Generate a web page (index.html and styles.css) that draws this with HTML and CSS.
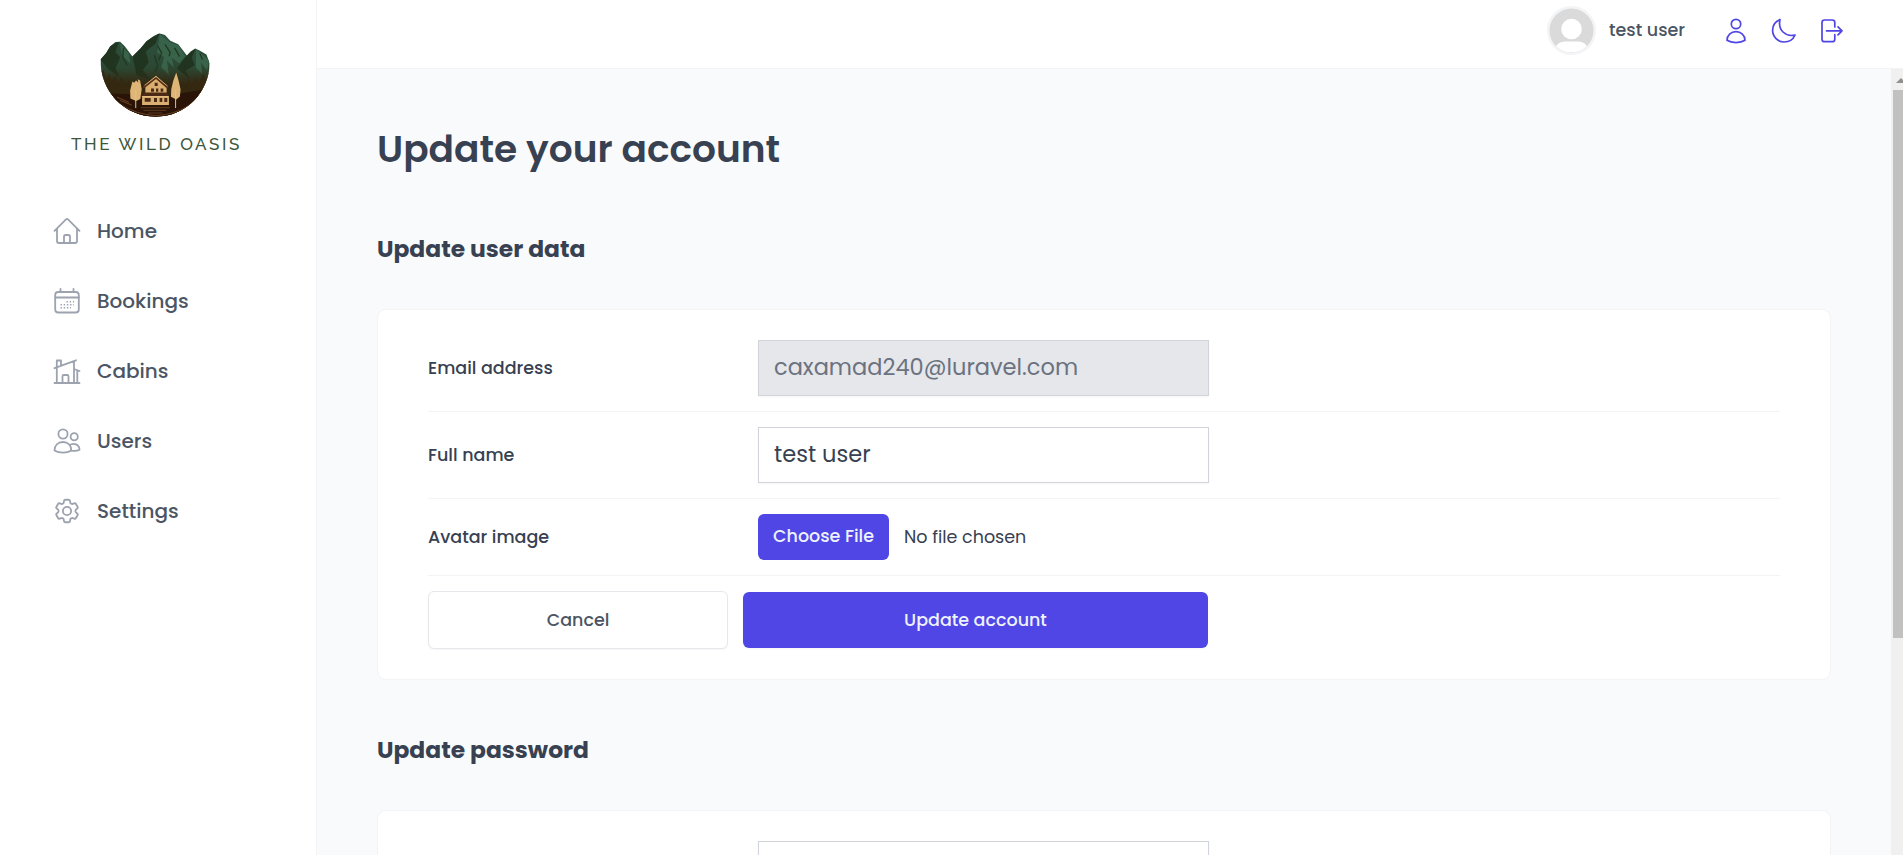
FILE: index.html
```html
<!DOCTYPE html>
<html lang="en">
<head>
<meta charset="utf-8">
<title>The Wild Oasis</title>
<link rel="stylesheet" href="styles.css">
</head>
<body>
<div class="app">
  <aside class="sidebar">
    <div class="logo">
      <svg class="logo-image" viewBox="150 38 330 253">
        <defs>
          <linearGradient id="ridge" x1="0" y1="0" x2="0" y2="1">
            <stop offset="0" stop-color="#2d5040"/><stop offset=".45" stop-color="#2c4732"/><stop offset=".7" stop-color="#38280f"/><stop offset="1" stop-color="#2a1408"/>
          </linearGradient>
          <linearGradient id="haze" x1="0" y1="0" x2="0" y2="1">
            <stop offset=".4" stop-color="#33260f" stop-opacity="0"/><stop offset=".75" stop-color="#33200d"/>
          </linearGradient>
          <clipPath id="bowl"><path d="M151 118L168 98L180 78L196 65L210 64L224 78L247 109L272 84L290 62L310 48L328 39L345 44L361 61L385 72L411 106L422 94L436 85L449 91L470 103L480 130C477 216 409 290 317 290C222 290 150 213 151 118Z"/></clipPath>
        </defs>
        <g clip-path="url(#bowl)">
          <path fill="url(#ridge)" d="M150 38H480V291H150Z"/>
          <path fill="#20341f" d="M151 118L180 78L206 64L196 96L210 111L196 145L207 170L172 145ZM247 109L285 65L328 39L317 70L287 94L296 125L278 150L304 180L260 165ZM411 106L437 85L426 112L434 135L407 151L420 177L381 144Z"/>
          <path fill="#38634a" d="M330 42L359 65L386 76L407 107L388 130L365 112L372 142L351 121L357 165L334 141L342 110L321 97ZM209 69L236 100L241 130L216 105ZM439 88L478 120L472 151L453 127L458 162L438 143Z"/>
          <path fill="none" stroke="#203823" stroke-width="4" d="M322 75L335 98L326 120M345 72L361 97L357 108M374 83L389 109M313 105L323 137L315 155M450 99L458 118M220 84L218 112L231 135M202 117L187 139"/>
          <path fill="url(#haze)" d="M150 38H480V291H150Z"/>
          <path fill="#352811" d="M151 135L155 155L160 150L167 178L178 160L184 185L195 168L203 190L214 172L225 199L237 180L243 207H392L399 189L407 207L417 178L426 197L438 173L447 189L460 160L468 182L480 150V291H150Z"/>
          <path fill="#291407" d="M150 220L245 222L320 232L480 205V291H150Z"/>
          <path fill="none" stroke="#8e5934" stroke-width="2" d="M157 172Q186 276 317 287Q431 280 467 190M200 231L237 247M210 241L245 255"/>
          <path fill="#dfb477" d="M258 181L265 187L263 177L270 181L275 207L271 237L258 243L241 235L240 211L247 184L252 188ZM379 157L386 181L392 208L390 229L379 238L363 230L364 207L370 182Z"/>
          <path stroke="#e8be80" stroke-width="3" d="M257 210V264M377 208V264"/>
          <path fill="#d9ae70" d="M286 194L318 167L350 196V222L357 230V255H276V229L286 222Z"/>
          <path fill="none" stroke="#5a3218" stroke-width="6" d="M280 203L318 173L354 204"/>
          <path fill="none" stroke="#efc98b" stroke-width="2" d="M283 196L318 169L353 198M275 229H357"/>
          <path fill="#4b2b15" d="M284 217H350L359 228H271ZM303 205H312V215H303ZM318 205H325V215H318ZM332 205H340V215H332ZM284 234H302V245H284ZM312 234H321V246H312ZM329 234H337V246H329ZM343 234H352V246H343ZM314 188H323V198H314Z"/>
          <path fill="none" stroke="#7b4c2c" stroke-width="2" d="M272 263H360M280 271H349M295 279H337"/>
        </g>
      </svg>
      <span class="logo-text">THE WILD OASIS</span>
    </div>
    <nav class="nav">
      <a class="nav-link"><svg class="icon" viewBox="0 0 30 30"><path d="M2.500 14.800L14 3.400q1-.9 2 0L27.500 14.800M5 12.500V25q0 2 2 2H23q2 0 2-2V12.500M12 27V20.700q0-1.700 1.700-1.700h2.600q1.700 0 1.700 1.700V27"/></svg><span>Home</span></a>
      <a class="nav-link"><svg class="icon" viewBox="0 0 30 30"><rect x="3.200" y="6" width="23.600" height="20.500" rx="3"/><path d="M3.200 11.500H26.800M8.500 3V6M21.500 3V6"/><path class="dots" d="M14.500 15.700H22M8.500 18.700H22M8.500 21.700H19"/></svg><span>Bookings</span></a>
      <a class="nav-link"><svg class="icon" viewBox="0 0 30 30"><path d="M2.500 27H27.500M4.800 27V10.500M2.500 12.200L24 4.300M4.800 11V4.500H9V9.500M22 5V27M22 13L27.500 15M25.300 14.500V27M10.500 27V20.300q0-1.300 1.300-1.300h3.400q1.300 0 1.300 1.300V27"/></svg><span>Cabins</span></a>
      <a class="nav-link"><svg class="icon" viewBox="0 0 30 30"><circle cx="11" cy="8" r="4.600"/><circle cx="22.200" cy="10.700" r="3.600"/><path d="M2.500 24.500C2.500 19.300 6 16 11 16s8.300 3.300 8.300 8.500C15 27.300 7 27.300 2.500 24.500ZM17.500 19.300C21.500 16.300 27.500 18.300 27.500 23.800 25.500 25 22.500 25.200 19.300 24.700"/></svg><span>Users</span></a>
      <a class="nav-link"><svg class="icon" viewBox="0 0 24 24"><path class="gear" d="M9.594 3.940c.09-.542.56-.940 1.110-.940h2.593c.55 0 1.020.398 1.110.940l.213 1.281c.063.374.313.686.645.870.074.040.147.083.220.127.325.196.720.257 1.075.124l1.217-.456a1.125 1.125 0 0 1 1.370.490l1.296 2.247a1.125 1.125 0 0 1-.260 1.431l-1.003.827c-.293.241-.438.613-.430.992a7.723 7.723 0 0 1 0 .255c-.008.378.137.750.430.991l1.004.827c.424.350.534.955.260 1.430l-1.298 2.247a1.125 1.125 0 0 1-1.369.491l-1.217-.456c-.355-.133-.750-.072-1.076.124a6.470 6.470 0 0 1-.220.128c-.331.183-.581.495-.644.869l-.213 1.281c-.09.543-.560.940-1.110.940h-2.594c-.550 0-1.019-.398-1.110-.940l-.213-1.281c-.062-.374-.312-.686-.644-.870a6.520 6.520 0 0 1-.220-.127c-.325-.196-.720-.257-1.076-.124l-1.217.456a1.125 1.125 0 0 1-1.369-.490l-1.297-2.247a1.125 1.125 0 0 1 .260-1.431l1.004-.827c.292-.240.437-.613.430-.991a6.932 6.932 0 0 1 0-.255c.007-.380-.138-.751-.430-.992l-1.004-.827a1.125 1.125 0 0 1-.260-1.430l1.297-2.247a1.125 1.125 0 0 1 1.370-.491l1.216.456c.356.133.751.072 1.076-.124.072-.044.146-.086.220-.128.332-.183.582-.495.644-.869l.214-1.280Z"/><circle class="gear" cx="12" cy="12" r="3.300"/></svg><span>Settings</span></a>
    </nav>
  </aside>
  <header class="header">
    <div class="user">
      <svg class="avatar" viewBox="0 0 49 49"><defs><clipPath id="face"><circle cx="24.500" cy="24.500" r="22"/></clipPath></defs><circle cx="24.500" cy="24.500" r="24.500" fill="#f3f4f6"/><g clip-path="url(#face)"><path fill="#dadada" d="M0 0H49V49H0Z"/><circle cx="24.500" cy="23" r="10.300" fill="#fff"/><path fill="#fff" d="M8 43Q10 35.500 18 35.500H31Q39 35.500 41 43L36 46.200H13Z"/></g></svg>
      <span class="user-name">test user</span>
    </div>
    <div class="actions">
      <svg class="action" viewBox="0 0 28 28"><circle cx="14" cy="7" r="4.700"/><path d="M5 23.300C5 18 9 14.700 14 14.700s9 3.300 9 8.600C18.500 26.300 9.500 26.300 5 23.300Z"/></svg>
      <svg class="action" viewBox="0 0 28 28"><path d="M10 2.600C4.500 4.800 2.600 9.500 2.600 13.300 2.600 20 8 25 14.200 25c4.800 0 9-2.700 10.800-7C16.300 20.300 7.500 13.500 10 2.600Z"/></svg>
      <svg class="action" viewBox="0 0 28 28"><path d="M16.800 10V5.500q0-2.500-2.500-2.500H6.500Q4 3 4 5.500V22.200q0 2.500 2.500 2.500h7.800q2.500 0 2.500-2.500V17.500M8.500 13.800H24M20 9.800L24 13.800L20 17.800"/></svg>
    </div>
  </header>
  <div class="viewport">
    <main class="main">
      <h1 class="title">Update your account</h1>
      <section class="section">
        <h3 class="subtitle">Update user data</h3>
        <form class="card">
          <div class="row"><label class="label">Email address</label><div class="input disabled">caxamad240@luravel.com</div></div>
          <div class="row"><label class="label">Full name</label><div class="input">test user</div></div>
          <div class="row"><label class="label">Avatar image</label><div class="file"><span class="file-button">Choose File</span><span class="file-name">No file chosen</span></div></div>
          <div class="buttons"><button type="button" class="button secondary">Cancel</button><button type="button" class="button primary">Update account</button></div>
        </form>
      </section>
      <section class="section">
        <h3 class="subtitle">Update password</h3>
        <form class="card"><div class="row"><label class="label"></label><div class="input"></div></div></form>
      </section>
    </main>
    <div class="scrollbar"><div class="scroll-arrow"></div><div class="scroll-thumb"></div></div>
  </div>
</div>
</body>
</html>
```
FILE: styles.css
```css
* { box-sizing: border-box; margin: 0; padding: 0; }
body {
  height: 855px;
  overflow: hidden;
  color: #374151;
  font-family: Poppins, Inter, sans-serif;
}
.app { display: grid; grid-template: 69px 786px / 317px 1fr; }
.sidebar { grid-row: 1 / 3; background: #fff; border-right: 1px solid #f3f4f6; padding-top: 33px; }
.logo { display: flex; flex-direction: column; align-items: center; padding-right: 6px; }
.logo-image { display: block; width: 110px; height: 84px; }
.logo-text { margin: 16px 0 0 3px; height: 22px; font: 500 17px/22px Raleway, Lato, sans-serif; letter-spacing: 2.6px; color: #3c573a; white-space: nowrap; }
.nav { display: flex; flex-direction: column; margin-top: 41px; padding-left: 52px; }
.nav-link { display: flex; align-items: center; gap: 15px; height: 70px; font-size: 20px; font-weight: 500; color: #4b5563; }
.icon { width: 30px; height: 30px; fill: none; stroke: #9ca3af; stroke-width: 1.8; stroke-linecap: round; stroke-linejoin: round; }
.gear { stroke-width: 1.45; }
.dots { stroke-width: 1.6; stroke-dasharray: 1.4 1.8; stroke-linecap: butt; }
.header { display: flex; justify-content: flex-end; align-items: center; gap: 37px; background: #fff; border-bottom: 1px solid #f3f4f6; padding: 0 57px 7px 0; }
.user { display: flex; align-items: center; gap: 13px; }
.avatar { width: 49px; height: 49px; }
.user-name { padding-bottom: 2px; font-size: 17.5px; font-weight: 500; color: #4b5563; }
.actions { display: flex; gap: 20px; }
.action { width: 28px; height: 28px; fill: none; stroke: #4f46e5; stroke-width: 1.7; stroke-linecap: round; stroke-linejoin: round; }
.viewport { display: flex; background: #f9fafb; overflow: hidden; }
.main { flex: 1; padding: 50px 60px 0; }
.title { height: 60px; font-size: 37.5px; line-height: 60px; font-weight: 600; }
.section { margin-top: 40px; }
.subtitle { height: 60px; line-height: 59px; font-size: 23.4px; font-weight: 700; }
.card { margin-top: 30px; border: 1px solid #f3f4f6; border-radius: 9px; background: #fff; padding: 15px 50px; }
.row { display: grid; grid-template-columns: 300px 451px; gap: 30px; align-items: center; padding: 15px 0; border-bottom: 1px solid #f3f4f6; }
.label { padding-bottom: 1px; font-size: 17.5px; font-weight: 500; }
.input { height: 56px; padding: 0 15px; border: 1px solid #d1d5db; box-shadow: 0 1px 2px rgba(0,0,0,.04); font-size: 22.5px; line-height: 52px; background: #fff; }
.disabled { background: #e5e7eb; color: #6b7280; }
.file { display: flex; align-items: center; gap: 15px; font-size: 17.5px; line-height: 45px; }
.file-button { height: 46px; width: 131px; text-align: center; border-radius: 6px; background: #4f46e5; color: #eef2ff; font-weight: 500; }
.buttons { display: flex; align-items: center; gap: 15px; padding: 15px 0; }
.button { height: 56px; padding-bottom: 1px; border: 0; border-radius: 6px; font: 500 17.5px Poppins, Inter, sans-serif; box-shadow: 0 1px 2px rgba(0,0,0,.04); }
.secondary { width: 300px; height: 58px; border: 1px solid #e5e7eb; background: #fff; color: #4b5563; }
.primary { width: 465px; background: #4f46e5; color: #eef2ff; }
.scrollbar { width: 12px; background: #f0f0f0; padding-left: 2px; overflow: hidden; }
.scroll-arrow { width: 0; height: 5px; margin: 9px 0 7px 3px; border: solid transparent; border-width: 0 5px 5px; border-bottom-color: #909090; }
.scroll-thumb { height: 548px; background: #c1c1c1; }
```
